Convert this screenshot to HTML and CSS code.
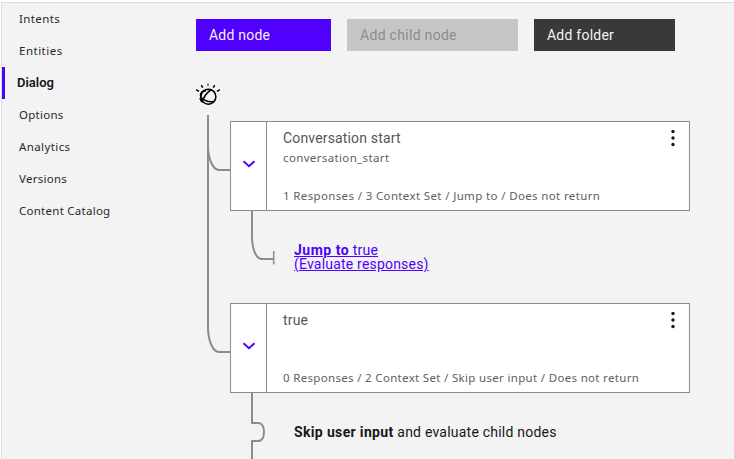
FILE: index.html
```html
<!DOCTYPE html>
<html lang="en">
<head>
<meta charset="utf-8">
<title>Dialog</title>
<link rel="stylesheet" href="styles.css">
</head>
<body>
<div class="shell">
  <nav class="nav">
    <a class="nav-item">Intents</a>
    <a class="nav-item wide">Entities</a>
    <a class="nav-item active">Dialog</a>
    <a class="nav-item tight">Options</a>
    <a class="nav-item">Analytics</a>
    <a class="nav-item tight">Versions</a>
    <a class="nav-item tight">Content Catalog</a>
  </nav>
  <main class="main">
    <div class="toolbar">
      <button class="btn primary">Add node</button>
      <button class="btn disabled">Add child node</button>
      <button class="btn dark">Add folder</button>
    </div>
    <div class="tree">
      <svg class="connectors" width="90" height="408" viewBox="196 51 90 408" fill="none" stroke="#8c8c8c" stroke-width="2">
        <path d="M208 115V327C208 341 213 352 219 352H230"/>
        <path d="M208 145C208 159 213 170 219 170H230"/>
        <path d="M252 210V236C252 249 256 259 262 259H273"/>
        <path d="M273.700 251V264.500" stroke-width="1.500"/>
        <path d="M252 392V423H258C262 423 264 427 264 432S262 441 258 441H252V459"/>
      </svg>
      <svg class="watson" width="24" height="24" viewBox="0 0 24 24" fill="none" stroke="#000" stroke-width="1.500">
        <circle cx="12.400" cy="13.700" r="7.500"/>
        <path d="M15.500 6.500C11 9.300 7.500 14 6.400 19"/>
        <path d="M10 8C6.500 7.500 4 10 4.500 12.500C5 16 12 20 18 18.500"/>
        <path d="M4 15C4.200 17 5.300 18.500 6.800 19.500"/>
        <path d="M.2 6.700L3 8.300M5.300 2.200L6.800 4.700M18.700 2.200L17.200 4.700M23.800 6.700L21 8.300"/>
        <path d="M12 .3V3.300" stroke="#8c8c8c" stroke-width="2"/>
      </svg>
      <section class="card">
        <div class="toggle"><svg width="14" height="10" viewBox="0 0 14 10"><path d="M1.500 2.200L7 7.200L12.500 2.200" fill="none" stroke="#5000ff" stroke-width="2"/></svg></div>
        <div class="content">
          <h2>Conversation start</h2>
          <p class="condition">conversation_start</p>
          <p class="summary">1 Responses / 3 Context Set / Jump to / Does not return</p>
        </div>
        <svg class="more" width="4" height="18" viewBox="0 0 4 18" fill="#171717"><circle cx="2" cy="1.600" r="1.700"/><circle cx="2" cy="8" r="1.700"/><circle cx="2" cy="14.500" r="1.700"/></svg>
      </section>
      <a class="jump"><b>Jump to</b> true<br>(Evaluate responses)</a>
      <section class="card">
        <div class="toggle"><svg width="14" height="10" viewBox="0 0 14 10"><path d="M1.500 2.200L7 7.200L12.500 2.200" fill="none" stroke="#5000ff" stroke-width="2"/></svg></div>
        <div class="content">
          <h2>true</h2>
          <p class="condition"></p>
          <p class="summary narrow">0 Responses / 2 Context Set / Skip user input / Does not return</p>
        </div>
        <svg class="more" width="4" height="18" viewBox="0 0 4 18" fill="#171717"><circle cx="2" cy="1.600" r="1.700"/><circle cx="2" cy="8" r="1.700"/><circle cx="2" cy="14.500" r="1.700"/></svg>
      </section>
      <p class="skip"><b>Skip user input</b> and evaluate child nodes</p>
    </div>
  </main>
</div>
</body>
</html>
```
FILE: styles.css
```css
* { box-sizing: border-box; }
body { margin: 0; background: #fff; font-family: Roboto, "Liberation Sans", sans-serif; font-size: 14px; color: #171717; overflow: hidden; }
h2, p { margin: 0; font-weight: 400; }
b { font-weight: 700; }
.shell { display: flex; height: 457px; margin: 2px 0 0 1px; border-top: 1px solid #dcdcdc; border-left: 1px solid #dcdcdc; background: #f3f3f3; }
.nav { width: 194px; flex: none; display: flex; flex-direction: column; }
.nav-item { height: 32px; line-height: 32px; padding-left: 17px; font-family: "Noto Sans", sans-serif; font-size: 11.500px; letter-spacing: .4px; color: #282828; }
.nav-item.wide { letter-spacing: .5px; }
.nav-item.tight { letter-spacing: .26px; }
.nav-item.active { border-left: 3px solid #5000ff; padding-left: 12px; font-family: Roboto, sans-serif; font-size: 13px; font-weight: 600; letter-spacing: 0; color: #171717; }
.main { width: 538px; padding-top: 16px; }
.toolbar { display: flex; gap: 16px; }
.btn { height: 32px; border: 0; padding: 0 13px; text-align: left; font: 14px/32px Roboto, sans-serif; letter-spacing: .23px; white-space: nowrap; color: #f3f3f3; }
.primary { width: 135px; background: #5000ff; }
.disabled { width: 171px; background: #c6c6c6; color: #8c8c8c; letter-spacing: .3px; }
.dark { width: 141px; background: #393939; }
.tree { position: relative; height: 408px; padding-top: 32px; }
.connectors { position: absolute; left: 0; top: 0; }
.watson { display: block; margin-bottom: 14px; }
.card { position: relative; display: flex; width: 460px; height: 90px; margin-left: 34px; background: #fff; border: 1px solid #8c8c8c; color: #565656; }
.toggle { width: 36px; border-right: 1px solid #8c8c8c; display: flex; align-items: center; justify-content: center; padding-bottom: 4px; }
.content { flex: 1; padding: 7px 0 0 16px; }
.content h2 { font-size: 14px; line-height: 19px; letter-spacing: .16px; }
.condition, .summary { font-family: "Noto Sans", sans-serif; font-size: 11.500px; line-height: 18px; height: 18px; letter-spacing: .36px; white-space: nowrap; color: #606060; }
.condition { margin-top: 1px; }
.summary { margin-top: 20px; }
.summary.narrow { letter-spacing: .32px; }
.more { margin: 8px 14px 0 0; }
.jump { display: block; height: 92px; padding: 32px 0 0 98px; line-height: 14px; letter-spacing: .2px; color: #5000ff; text-decoration: underline; text-underline-offset: 1px; }
.jump b { letter-spacing: .5px; }
.skip { padding: 29px 0 0 98px; line-height: 20px; letter-spacing: .22px; white-space: nowrap; }
.skip b { letter-spacing: .35px; }
```
